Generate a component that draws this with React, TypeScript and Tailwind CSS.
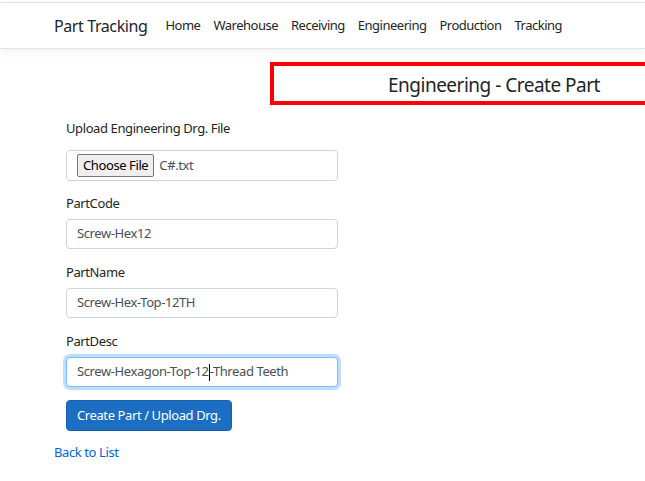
const font = { fontFamily: '"Segoe UI", "Noto Sans", "Open Sans", sans-serif' };

const links = ["Home", "Warehouse", "Receiving", "Engineering", "Production", "Tracking"];

function Field({ label, value, focused }: { label: string; value: string; focused?: boolean }) {
  const [before, after] = focused ? [value.slice(0, 20), value.slice(20)] : [value, ""];
  return (
    <div className="mb-[13px]">
      <div className="text-[13px] leading-[20px] tracking-[-0.4px] text-[#212529] mb-[6px]">{label}</div>
      <div
        className={
          "h-[30px] w-[272px] rounded-[4px] border bg-white px-[10px] flex items-center text-[13px] tracking-[-0.4px] text-[#495057] " +
          (focused ? "border-[#80bdff] shadow-[0_0_0_3px_rgba(0,123,255,0.25)]" : "border-[#ced4da]")
        }
      >
        <span>{before}</span>
        {focused && <span className="inline-block w-px h-[17px] bg-black" />}
        <span>{after}</span>
      </div>
    </div>
  );
}

export default function App() {
  return (
    <div className="min-h-[481px] bg-white text-[#212529]" style={font}>
      <nav className="mt-[2px] border-t border-[#dee2e6] h-[47px] border-b border-b-[#e5e5e5] shadow-[0_3px_8px_rgba(0,0,0,0.06)] flex items-center px-[54px]">
        <span className="whitespace-nowrap text-[16px] tracking-[-0.4px] text-[#212529] mr-[18px]">Part Tracking</span>
        <div className="flex gap-[13px] text-[13px] tracking-[-0.5px] text-[#212529] whitespace-nowrap">
          {links.map((l) => (
            <span key={l}>{l}</span>
          ))}
        </div>
      </nav>

      <div className="flex justify-start pl-[270px] mt-[13px]">
        <div className="h-[43px] flex-1 border-[4px] border-r-0 border-[#ff0000] flex items-center pl-[114px] pt-[3px] text-[19px] tracking-[-0.5px] text-[#212529] whitespace-nowrap">
          Engineering - Create Part
        </div>
      </div>

      <div className="px-[54px] mt-[13px]">
        <div className="pl-[12px]">
          <div className="mb-[12px]">
            <div className="text-[13px] leading-[20px] tracking-[-0.4px] mb-[12px]">Upload Engineering Drg. File</div>
            <div className="h-[31px] w-[272px] rounded-[4px] border border-[#ced4da] bg-white px-[10px] flex items-center text-[13px] tracking-[-0.4px] text-[#495057]">
              <span className="h-[23px] px-[5px] flex items-center border border-[#767676] rounded-[2px] bg-[#efefef] text-[#000] mr-[5px]">
                Choose File
              </span>
              <span>C#.txt</span>
            </div>
          </div>
          <Field label="PartCode" value="Screw-Hex12" />
          <Field label="PartName" value="Screw-Hex-Top-12TH" />
          <Field label="PartDesc" value="Screw-Hexagon-Top-12-Thread Teeth" focused />
          <button className="h-[31px] px-[10px] rounded-[4px] bg-[#1b6ec2] border border-[#1861ac] text-white text-[13px] tracking-[-0.4px]">
            Create Part / Upload Drg.
          </button>
        </div>
        <div className="mt-[11px] text-[13px] leading-[20px] tracking-[-0.4px] text-[#0366d6]">Back to List</div>
      </div>
    </div>
  );
}
